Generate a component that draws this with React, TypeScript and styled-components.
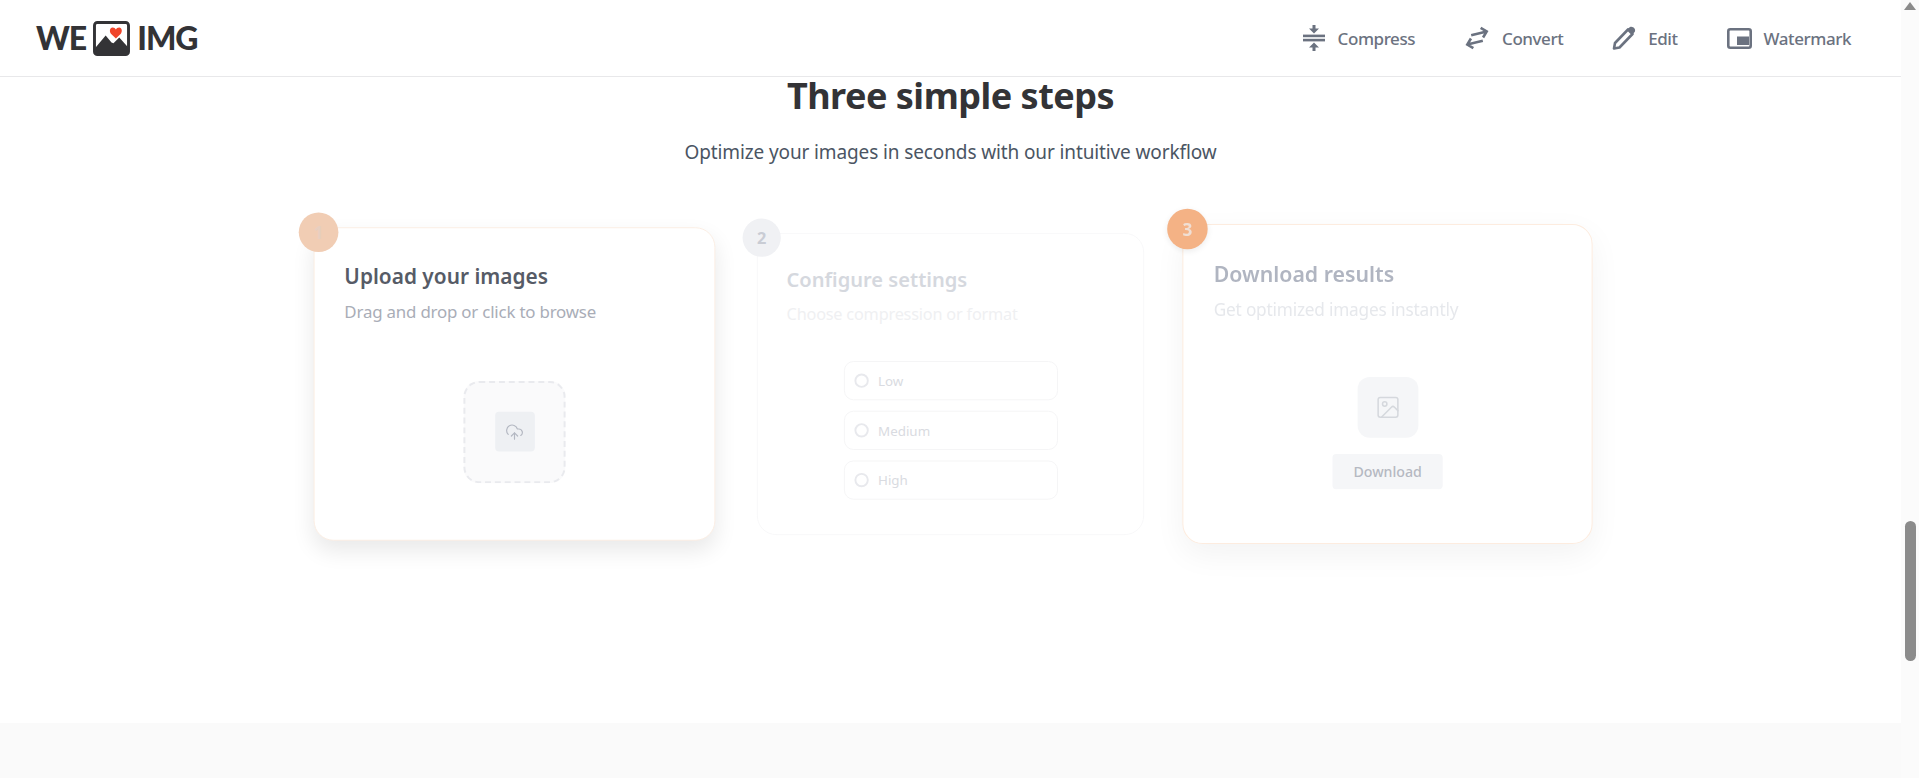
import React from 'react';
import styled, { createGlobalStyle } from 'styled-components';
import { CloudUpload, Image as ImageIcon } from 'lucide-react';

const GlobalStyle = createGlobalStyle`
  html, body {
    margin: 0;
    height: 100%;
    overflow: hidden;
    background: #ffffff;
  }
  * {
    box-sizing: border-box;
  }
`;

type Tone = {
  scale: number;
  shift: number;
  border: string;
  shadow: string;
  title: string;
  text: string;
  badge: string;
  badgeText: string;
  badgeShadow: string;
};

const tones: Record<'upload' | 'configure' | 'download', Tone> = {
  upload: {
    scale: 0.992,
    shift: 1,
    border: '#fbeee4',
    shadow: '0 10px 22px rgba(0, 0, 0, 0.09)',
    title: '#565b66',
    text: '#a9adb7',
    badge: '#f1cdb4',
    badgeText: '#e7cfc0',
    badgeShadow: 'none',
  },
  configure: {
    scale: 0.956,
    shift: 0,
    border: '#f8f8f9',
    shadow: 'none',
    title: '#d5d8de',
    text: '#eff0f2',
    badge: '#f0f1f4',
    badgeText: '#c9ccd4',
    badgeShadow: 'none',
  },
  download: {
    scale: 1.013,
    shift: 0,
    border: '#fdecdf',
    shadow: '0 10px 30px rgba(0, 0, 0, 0.05)',
    title: '#b0b5c1',
    text: '#e6e8ec',
    badge: '#f4b285',
    badgeText: '#f0dfd4',
    badgeShadow: '0 2px 6px rgba(0, 0, 0, 0.08)',
  },
};

const Page = styled.div`
  display: flex;
  height: 778px;
  overflow: hidden;
  font-family: 'Noto Sans', 'Open Sans', sans-serif;
`;

const Main = styled.div`
  flex: 1;
  min-width: 0;
  display: flex;
  flex-direction: column;
`;

const Header = styled.header`
  height: 77px;
  flex: none;
  display: flex;
  align-items: center;
  justify-content: space-between;
  padding: 0 50px 0 36px;
  border-bottom: 1px solid #e8e8ea;
`;

const Logo = styled.div`
  display: flex;
  align-items: center;
  gap: 7px;
  font-family: 'Lato', sans-serif;
  font-weight: 900;
  font-size: 32px;
  line-height: 1;
  letter-spacing: -1px;
  color: #333336;
`;

const Nav = styled.nav`
  display: flex;
  gap: 49px;
`;

const NavItem = styled.a`
  display: flex;
  align-items: center;
  gap: 12px;
  font-size: 17px;
  font-weight: 500;
  letter-spacing: -0.44px;
  color: #6b7280;
`;

const Section = styled.section`
  height: 646px;
  flex: none;
`;

const Heading = styled.h2`
  margin: 0;
  text-align: center;
  font-size: 36px;
  line-height: 38px;
  font-weight: 700;
  letter-spacing: -0.5px;
  color: #333336;
`;

const Lead = styled.p`
  margin: 23px 0 0;
  text-align: center;
  font-size: 19px;
  line-height: 28px;
  letter-spacing: -0.12px;
  color: #4b5563;
`;

const Steps = styled.div`
  width: 1280px;
  margin: 60px auto 0;
  display: grid;
  grid-template-columns: repeat(3, 1fr);
  gap: 32px;
`;

const Card = styled.article<{ $tone: Tone }>`
  position: relative;
  height: 316px;
  display: flex;
  flex-direction: column;
  padding: 31px 30px 0;
  background: #ffffff;
  border: 1px solid ${(p) => p.$tone.border};
  border-radius: 20px;
  box-shadow: ${(p) => p.$tone.shadow};
  transform: translateX(${(p) => p.$tone.shift}px) scale(${(p) => p.$tone.scale});
`;

const Badge = styled.span<{ $tone: Tone }>`
  position: absolute;
  top: -16px;
  left: -16px;
  width: 40px;
  height: 40px;
  display: flex;
  align-items: center;
  justify-content: center;
  border-radius: 50%;
  font-size: 17px;
  font-weight: 700;
  background: ${(p) => p.$tone.badge};
  color: ${(p) => p.$tone.badgeText};
  box-shadow: ${(p) => p.$tone.badgeShadow};
`;

const CardTitle = styled.h3<{ $tone: Tone }>`
  margin: 0;
  font-size: 21px;
  line-height: 34px;
  font-weight: 600;
  color: ${(p) => p.$tone.title};
`;

const CardText = styled.p<{ $tone: Tone }>`
  margin: 7px 0 0;
  font-size: 17px;
  line-height: 24px;
  letter-spacing: -0.2px;
  color: ${(p) => p.$tone.text};
`;

const CardBody = styled.div`
  flex: 1;
  display: flex;
  flex-direction: column;
  align-items: center;
  justify-content: center;
`;

const DropZone = styled.div`
  width: 103px;
  height: 103px;
  display: flex;
  align-items: center;
  justify-content: center;
  background: #fafafb;
  border: 2px dashed #e9eaee;
  border-radius: 16px;
`;

const DropIcon = styled.div`
  width: 40px;
  height: 40px;
  display: flex;
  align-items: center;
  justify-content: center;
  background: #eef0f3;
  border-radius: 4px;
  color: #b4b8c2;
`;

const Options = styled.div`
  display: flex;
  flex-direction: column;
  gap: 11px;
  width: 224px;
`;

const Option = styled.div`
  height: 41px;
  display: flex;
  align-items: center;
  gap: 10px;
  padding: 0 10px;
  border: 1px solid #f4f5f6;
  border-radius: 10px;
  font-size: 14px;
  color: #d9dbe1;
`;

const Radio = styled.span`
  width: 15px;
  height: 15px;
  border: 2px solid #e8e9ed;
  border-radius: 50%;
`;

const ResultTile = styled.div`
  width: 60px;
  height: 60px;
  display: flex;
  align-items: center;
  justify-content: center;
  background: #f5f6f8;
  border-radius: 12px;
  color: #d5d8dd;
`;

const DownloadButton = styled.div`
  width: 109px;
  height: 35px;
  margin-top: 16px;
  display: flex;
  align-items: center;
  justify-content: center;
  background: #f5f6f8;
  border-radius: 4px;
  font-size: 14px;
  font-weight: 500;
  color: #b5b9c2;
`;

const FooterBand = styled.div`
  flex: 1;
  background: #fafafa;
`;

const Scrollbar = styled.aside`
  width: 18px;
  flex: none;
  display: flex;
  flex-direction: column;
  align-items: center;
  background: #fbfbfb;
`;

const ScrollArrow = styled.span`
  margin-top: 2px;
  width: 0;
  height: 0;
  border-left: 6.5px solid transparent;
  border-right: 6.5px solid transparent;
  border-bottom: 8px solid #8b8b8b;
`;

const ScrollThumb = styled.span`
  margin-top: 511px;
  width: 11px;
  height: 140px;
  border-radius: 6px;
  background: #8b8b8b;
`;

const LogoMark = () => (
  <svg width="37" height="35" viewBox="0 0 38 36" aria-hidden="true">
    <rect x="1.5" y="1.5" width="35" height="33" rx="3" fill="#fff" stroke="#333336" strokeWidth="3" />
    <path d="M2 34V28L13 15L19 22L21 23L27 17L36 27V34Z" fill="#333336" />
    <path
      d="M23.5 18L18.4 13C16.6 11 17.2 7 20 6.8C21.6 6.7 22.8 7.6 23.5 8.8C24.2 7.6 25.4 6.7 27 6.8C29.8 7 30.4 11 28.6 13Z"
      fill="#f0452b"
    />
  </svg>
);

const CompressIcon = () => (
  <svg width="24" height="28" viewBox="0 0 24 28" fill="#6b7280" aria-hidden="true">
    <rect x="1" y="10.6" width="22" height="2.6" />
    <rect x="1" y="14.8" width="22" height="2.6" />
    <path d="M10.5 1H13.5V4.5H17L12 9.6L7 4.5H10.5Z" />
    <path d="M10.5 27H13.5V23.5H17L12 18.4L7 23.5H10.5Z" />
  </svg>
);

const ConvertIcon = () => (
  <svg width="26" height="24" viewBox="0 0 26 24" fill="none" stroke="#6b7280" strokeWidth="2.6" aria-hidden="true">
    <g transform="rotate(-14 13 12)">
      <path d="M8 8H24M19 3L24 8L19 13" />
      <path d="M18 16H2M7 11L2 16L7 21" />
    </g>
  </svg>
);

const PencilIcon = () => (
  <svg width="24" height="24" viewBox="0 0 24 24" aria-hidden="true">
    <path d="M2 22.5L3 17L16 3.5L20.5 8L7.5 21.5Z" fill="#fff" stroke="#6b7280" strokeWidth="2.6" strokeLinejoin="round" />
    <path d="M15.5 3L18 1C19.5 0.2 21.5 1 22.5 2.5C23.5 4 23.2 5.5 22.2 6.5L20 8.5Z" fill="#6b7280" />
  </svg>
);

const WatermarkIcon = () => (
  <svg width="25" height="21" viewBox="0 0 25 21" aria-hidden="true">
    <rect x="1.3" y="1.3" width="22.4" height="18.4" rx="2" fill="none" stroke="#6b7280" strokeWidth="2.6" />
    <rect x="10" y="8.5" width="12" height="8.5" fill="#6b7280" />
  </svg>
);

const App: React.FC = () => {
  return (
    <Page>
      <GlobalStyle />
      <Main>
        <Header>
          <Logo>
            WE
            <LogoMark />
            IMG
          </Logo>
          <Nav>
            <NavItem><CompressIcon />Compress</NavItem>
            <NavItem><ConvertIcon />Convert</NavItem>
            <NavItem><PencilIcon />Edit</NavItem>
            <NavItem><WatermarkIcon />Watermark</NavItem>
          </Nav>
        </Header>
        <Section>
          <Heading>Three simple steps</Heading>
          <Lead>Optimize your images in seconds with our intuitive workflow</Lead>
          <Steps>
            <Card $tone={tones.upload}>
              <Badge $tone={tones.upload}>1</Badge>
              <CardTitle $tone={tones.upload}>Upload your images</CardTitle>
              <CardText $tone={tones.upload}>Drag and drop or click to browse</CardText>
              <CardBody>
                <DropZone>
                  <DropIcon>
                    <CloudUpload size={19} strokeWidth={1.5} />
                  </DropIcon>
                </DropZone>
              </CardBody>
            </Card>
            <Card $tone={tones.configure}>
              <Badge $tone={tones.configure}>2</Badge>
              <CardTitle $tone={tones.configure}>Configure settings</CardTitle>
              <CardText $tone={tones.configure}>Choose compression or format</CardText>
              <CardBody>
                <Options>
                  {['Low', 'Medium', 'High'].map((level) => (
                    <Option key={level}>
                      <Radio />
                      {level}
                    </Option>
                  ))}
                </Options>
              </CardBody>
            </Card>
            <Card $tone={tones.download}>
              <Badge $tone={tones.download}>3</Badge>
              <CardTitle $tone={tones.download}>Download results</CardTitle>
              <CardText $tone={tones.download}>Get optimized images instantly</CardText>
              <CardBody>
                <ResultTile>
                  <ImageIcon size={26} strokeWidth={1.4} />
                </ResultTile>
                <DownloadButton>Download</DownloadButton>
              </CardBody>
            </Card>
          </Steps>
        </Section>
        <FooterBand />
      </Main>
      <Scrollbar>
        <ScrollArrow />
        <ScrollThumb />
      </Scrollbar>
    </Page>
  );
};

export default App;
